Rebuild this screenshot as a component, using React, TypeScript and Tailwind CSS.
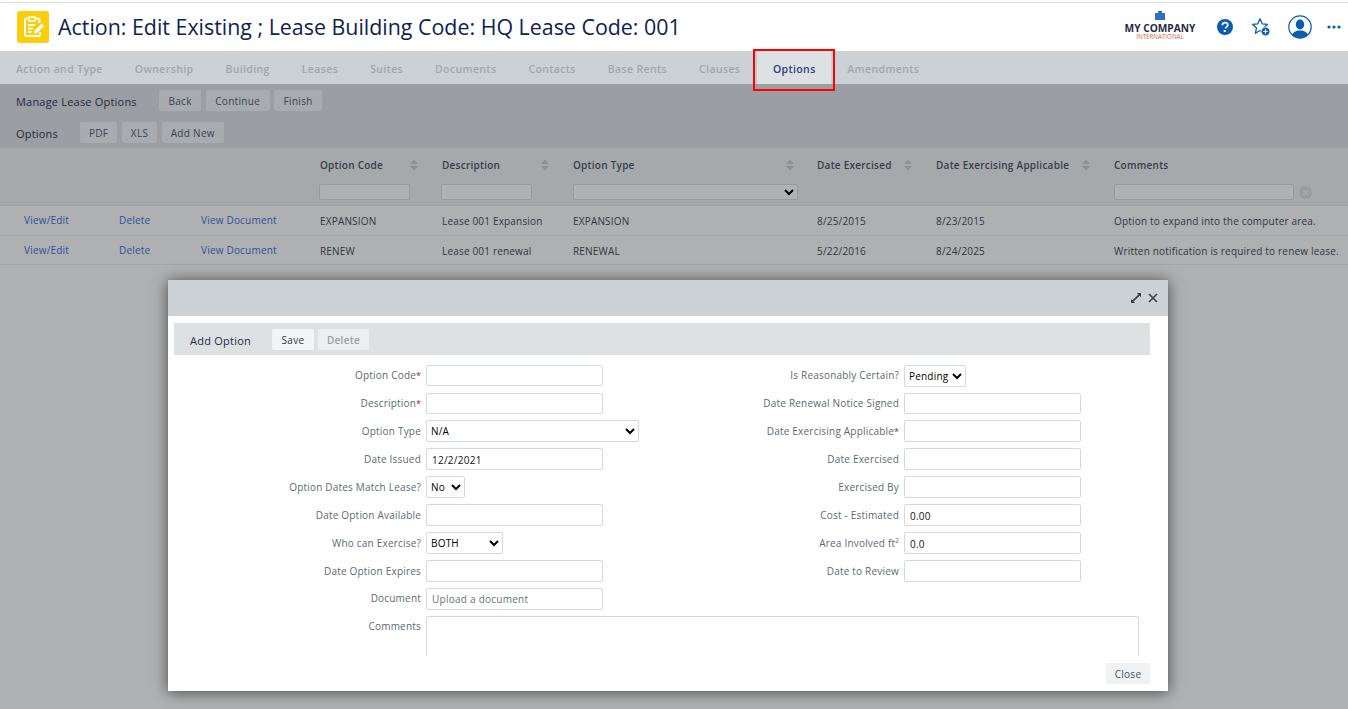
const font = { fontFamily: '"Open Sans", sans-serif' };

const tabs = ['Action and Type', 'Ownership', 'Building', 'Leases', 'Suites', 'Documents', 'Contacts', 'Base Rents', 'Clauses', 'Options', 'Amendments'];

const columns = 'grid grid-cols-[95px_82px_119px_122px_131px_244px_119px_178px_1fr] pl-[24px]';

const rows = [
  ['EXPANSION', 'Lease 001 Expansion', 'EXPANSION', '8/25/2015', '8/23/2015', 'Option to expand into the computer area.'],
  ['RENEW', 'Lease 001 renewal', 'RENEWAL', '5/22/2016', '8/24/2025', 'Written notification is required to renew lease.'],
];

function BarButton({ children, px = 'px-[9.5px]' }: { children: string; px?: string }) {
  return (
    <button className={`h-[21px] ${px} pt-[1px] rounded-[2px] bg-[#a8abaf] text-[#3a4454] text-[10px] font-medium tracking-[0.3px]`}>
      {children}
    </button>
  );
}

function SortIcon() {
  return (
    <svg width="8" height="12" viewBox="0 0 8 12" className="fill-[#8d9094]">
      <path d="M4 0.5 8 5H0z" />
      <path d="M4 11.500 0 7h8z" />
    </svg>
  );
}

function HeaderCell({ label, width, filter }: { label: string; width: string; filter?: string }) {
  return (
    <div className={`flex flex-col ${width}`}>
      <div className="flex h-[20px] items-center justify-between text-[10px] font-semibold tracking-[0.25px] text-[#363d48]">
        <span>{label}</span>
        <span className="mr-[2px]"><SortIcon /></span>
      </div>
      {filter === 'select' && (
        <select className="mt-[9px] h-[16px] w-[225px] rounded-[2px] border border-[#989b9e] bg-[#b0b1b3] text-[10px]" />
      )}
      {filter && filter !== 'select' && (
        <input className={`-ml-[1px] mt-[9px] h-[16px] rounded-[2px] border border-[#989b9e] bg-[#b0b1b3] ${filter}`} />
      )}
    </div>
  );
}

function Field({ label, req, children, h = 'h-[28px]', lh = 'leading-[22px]' }: { label: string; req?: boolean; children: React.ReactNode; h?: string; lh?: string }) {
  return (
    <div className={`flex ${h}`}>
      <div className={`w-[252px] pr-[5px] text-right text-[10px] tracking-[0.2px] text-[#5d6773] ${lh}`}>
        {label}
        {req && <span className="text-[9px] tracking-normal text-[#a02030]">*</span>}
      </div>
      {children}
    </div>
  );
}

const inputClass = 'h-[22px] w-[177px] rounded-[2px] border border-[#d5d9dc] bg-white px-[5px] pt-[1px] text-[10px] tracking-[0.25px] text-[#111]';
const uploadClass = 'h-[22px] w-[177px] rounded-[2px] border border-[#d5d9dc] bg-white px-[5px] text-[10px] tracking-[0.25px] placeholder:text-[#66707a]';
const shortInput = 'h-[21px] w-[177px] rounded-[2px] border border-[#d5d9dc] bg-white';
const selectClass = 'h-[22px] rounded-[2px] border border-[#d5d9dc] bg-white text-[10px] tracking-[0.2px] text-black';

function LogoIcon() {
  return (
    <svg width="32" height="32" viewBox="0 0 32 32" className="rounded-[3px] bg-[#fbcd0a]">
      <path d="M11 7.500H9.500a1.500 1.500 0 0 0-1.500 1.500v14.500A1.500 1.500 0 0 0 9.500 25h12a1.500 1.500 0 0 0 1.500-1.500V21" fill="none" stroke="#fff" strokeWidth="2" />
      <path d="M19 7.500h2a1.500 1.500 0 0 1 1.500 1.500v3" fill="none" stroke="#fff" strokeWidth="2" />
      <path d="M12 6h6v4h-6z" fill="none" stroke="#fff" strokeWidth="1.6" />
      <path d="M11 14h7M11 17.500h5M11 21h3.500" stroke="#fff" strokeWidth="1.8" />
      <path d="M17 22.500l.6-3 7-7 2.400 2.400-7 7z" fill="#fff" />
    </svg>
  );
}

function HeaderIcons() {
  return (
    <div className="flex items-center">
      <svg width="18" height="18" viewBox="0 0 18 18" className="ml-[20px]">
        <circle cx="9" cy="9" r="8" fill="#0b5cad" />
        <path d="M6.300 7.200c0-1.600 1.200-2.600 2.800-2.600s2.700.9 2.700 2.300c0 1.900-2.200 2-2.200 3.600" fill="none" stroke="#fff" strokeWidth="1.8" />
        <rect x="7.700" y="12" width="2" height="2" fill="#fff" />
      </svg>
      <svg width="20" height="20" viewBox="0 0 20 20" className="ml-[17px]">
        <path d="M9 1.800l2.200 5 5.300.5-4 3.600 1.100 5.300L9 13.500l-4.600 2.700 1.100-5.300-4-3.600 5.300-.5z" fill="none" stroke="#0b5cad" strokeWidth="1.3" strokeLinejoin="round" />
        <circle cx="14.500" cy="14.500" r="4.400" fill="#0b5cad" stroke="#fff" strokeWidth="0.8" />
        <path d="M14.500 12.300v4.400M12.300 14.500h4.400" stroke="#fff" strokeWidth="1.2" />
      </svg>
      <svg width="24" height="24" viewBox="0 0 24 24" className="ml-[17px]">
        <defs>
          <clipPath id="userClip"><circle cx="12" cy="12" r="11" /></clipPath>
        </defs>
        <circle cx="12" cy="12" r="11.200" fill="#fff" stroke="#0b5cad" strokeWidth="1.2" />
        <g clipPath="url(#userClip)" fill="#0b5cad">
          <ellipse cx="12" cy="9.500" rx="4.200" ry="5" />
          <path d="M3 24c0-5.500 3.500-7.500 6.500-8.500h5c3 1 6.500 3 6.500 8.500z" />
        </g>
      </svg>
      <svg width="14" height="4" viewBox="0 0 14 4" className="ml-[15px] mr-[7px]" fill="#0b5cad">
        <circle cx="2" cy="2" r="1.600" />
        <circle cx="7" cy="2" r="1.600" />
        <circle cx="12" cy="2" r="1.600" />
      </svg>
    </div>
  );
}

export default function App() {
  return (
    <div style={font} className="relative h-[709px] w-[1348px] overflow-hidden bg-[#afb0b2]">
      <div className="bg-white pt-[2px]">
        <header className="flex h-[49px] items-center justify-between border-t border-[#dcdcdc] pl-[17px]">
          <div className="flex items-center">
            <LogoIcon />
            <h1 className="ml-[9px] text-[21.4px] font-medium text-[#0e2250]">
              Action: Edit Existing ; Lease Building Code: HQ Lease Code: 001
            </h1>
          </div>
          <div className="flex items-center">
            <div className="relative flex w-[72px] flex-col items-center pt-[9px]">
              <svg width="10" height="9" viewBox="0 0 10 9" className="absolute left-[31px] top-[-3px]" fill="#2f6fc4">
                <rect x="0" y="2" width="10" height="7" />
                <rect x="3" y="0" width="4" height="2" />
              </svg>
              <span className="text-[10.2px] font-bold leading-[10px] whitespace-nowrap text-[#1f2a44]">MY COMPANY</span>
              <span className="text-[6.2px] leading-[7px] whitespace-nowrap text-[#d2604f]">INTERNATIONAL</span>
            </div>
            <HeaderIcons />
          </div>
        </header>
      </div>

      <nav className="flex h-[33px] bg-[#ccd1d5] text-[10.5px] font-semibold tracking-[0.37px]">
        {tabs.map((tab) =>
          tab === 'Options' ? (
            <div key={tab} className="flex w-[75px] items-center justify-center border-l border-[#c0c4c8] bg-[#dee1e4] pt-[4px] text-[#2a4474]">
              {tab}
            </div>
          ) : (
            <div key={tab} className="flex items-center px-[16px] pt-[4px] text-[#a1a6ab]">
              {tab}
            </div>
          ),
        )}
      </nav>
      <div className="absolute left-[753px] top-[49px] h-[42px] w-[82px] border-[2px] border-[#ff0000]" />

      <section className="h-[64px] bg-[#9b9ea2] pl-[16px]">
        <div className="flex h-[32px] items-start pt-[6px]">
          <span className="mt-[1px] w-[143px] text-[11px] leading-[21px] font-medium tracking-[0.2px] text-[#1f2a44]">Manage Lease Options</span>
          <div className="flex gap-[4.5px]">
            <BarButton>Back</BarButton>
            <BarButton>Continue</BarButton>
            <BarButton>Finish</BarButton>
          </div>
        </div>
        <div className="flex h-[32px] items-start pt-[6px]">
          <span className="mt-[1px] w-[64px] text-[11px] leading-[21px] font-medium tracking-[0.2px] text-[#1f2a44]">Options</span>
          <div className="flex gap-[4.5px]">
            <BarButton px="px-[9px]">PDF</BarButton>
            <BarButton px="px-[9px]">XLS</BarButton>
            <BarButton px="px-[9px]">Add New</BarButton>
          </div>
        </div>
      </section>

      <div className={`${columns} h-[58px] border-b border-[#a0a3a6] bg-[#a6a9ac] pt-[7px]`}>
        <div />
        <div />
        <div />
        <HeaderCell label="Option Code" width="w-[100px]" filter="w-[91px]" />
        <HeaderCell label="Description" width="w-[109px]" filter="w-[91px]" />
        <HeaderCell label="Option Type" width="w-[223px]" filter="select" />
        <HeaderCell label="Date Exercised" width="w-[97px]" />
        <HeaderCell label="Date Exercising Applicable" width="w-[156px]" />
        <div className="flex flex-col">
          <div className="flex h-[20px] items-center text-[10px] font-semibold tracking-[0.25px] text-[#363d48]">Comments</div>
          <div className="mt-[9px] flex items-center">
            <input className="h-[16px] w-[180px] rounded-[2px] border border-[#989b9e] bg-[#b0b1b3]" />
            <span className="ml-[5px] flex h-[13px] w-[13px] items-center justify-center rounded-full bg-[#999c9f] text-[9px] leading-none text-[#afb0b2]">✕</span>
          </div>
        </div>
      </div>

      {rows.map((row) => (
        <div key={row[0]} className={`${columns} h-[29.5px] items-center border-b border-[#a2a5a8] pt-[3px] text-[10px] tracking-[0.18px] text-[#2f3640]`}>
          <span className="-mt-[2px] tracking-[0.2px] text-[#2f4ea0]">View/Edit</span>
          <span className="-mt-[2px] tracking-[0.2px] text-[#2f4ea0]">Delete</span>
          <span className="-mt-[2px] tracking-[0.2px] text-[#2f4ea0]">View Document</span>
          {row.map((cell) => (
            <span key={cell} className="whitespace-nowrap">{cell}</span>
          ))}
        </div>
      ))}

      <div className="absolute left-[168px] top-[280px] flex h-[411px] w-[1000px] flex-col bg-white shadow-[0_1px_14px_rgba(0,0,0,0.6)]">
        <div className="flex h-[36px] items-center justify-end gap-[7px] bg-[#ccd1d5] pr-[10px]">
          <svg width="10" height="10" viewBox="0 0 11 11" fill="#3a4048">
            <path d="M6.500 0H11v4.500L9.400 2.900 2.900 9.400 4.500 11H0V6.500L1.600 8.100 8.100 1.600z" />
          </svg>
          <svg width="10" height="10" viewBox="0 0 10 10" stroke="#3a4048" strokeWidth="1.6">
            <path d="M1 1l8 8M9 1L1 9" />
          </svg>
        </div>

        <div className="mx-[6px] mt-[7px] flex h-[32px] w-[976px] items-center bg-[#dee1e4] pl-[16px]">
          <span className="w-[82px] pt-[4px] text-[11px] font-medium tracking-[0.25px] text-[#1f2a44]">Add Option</span>
          <button className="h-[21px] w-[42px] rounded-[2px] bg-[#f3f4f5] pt-[2px] text-[10px] font-medium tracking-[0.35px] text-[#2f3746]">Save</button>
          <button className="ml-[4px] h-[21px] w-[51px] rounded-[2px] bg-[#eceef0] pt-[2px] text-[10px] font-semibold tracking-[0.3px] text-[#9aa0a6]">Delete</button>
        </div>

        <div className="mx-[6px] mt-[10px] h-[291px] overflow-hidden">
          <div className="flex">
            <div className="flex flex-col">
              <Field label="Option Code" req lh="leading-[20px]"><input className={shortInput} /></Field>
              <Field label="Description" req h="h-[27px]" lh="leading-[20px]"><input className={shortInput} /></Field>
              <Field label="Option Type">
                <select defaultValue="N/A" className={`${selectClass} w-[213px]`}><option>N/A</option></select>
              </Field>
              <Field label="Date Issued"><input defaultValue="12/2/2021" className={inputClass} /></Field>
              <Field label="Option Dates Match Lease?">
                <select defaultValue="No" className={`${selectClass} w-[39px]`}><option>No</option></select>
              </Field>
              <Field label="Date Option Available"><input className={inputClass} /></Field>
              <Field label="Who can Exercise?">
                <select defaultValue="BOTH" className={`${selectClass} w-[77px]`}><option>BOTH</option></select>
              </Field>
              <Field label="Date Option Expires"><input className={inputClass} /></Field>
              <Field label="Document" lh="leading-[20px]"><input placeholder="Upload a document" className={uploadClass} /></Field>
            </div>
            <div className="ml-[13px] flex flex-col">
              <Field label="Is Reasonably Certain?" lh="leading-[20px]">
                <select defaultValue="Pending" className={`${selectClass} h-[21px] w-[62px]`}><option>Pending</option></select>
              </Field>
              <Field label="Date Renewal Notice Signed" h="h-[27px]" lh="leading-[20px]"><input className={shortInput} /></Field>
              <Field label="Date Exercising Applicable" req><input className={inputClass} /></Field>
              <Field label="Date Exercised"><input className={inputClass} /></Field>
              <Field label="Exercised By"><input className={inputClass} /></Field>
              <Field label="Cost - Estimated"><input defaultValue="0.00" className={inputClass} /></Field>
              <Field label="Area Involved ft²"><input defaultValue="0.0" className={inputClass} /></Field>
              <Field label="Date to Review"><input className={inputClass} /></Field>
            </div>
          </div>
          <Field label="Comments" h="h-[60px]" lh="leading-[20px]">
            <textarea className="h-[60px] w-[713px] resize-none rounded-[2px] border border-[#d5d9dc] bg-white" />
          </Field>
        </div>

        <div className="mr-[18px] mt-[7px] flex justify-end">
          <button className="h-[21px] w-[44px] rounded-[2px] bg-[#f0f1f2] pt-[1px] text-[10px] font-medium tracking-[0.3px] text-[#4a5260]">Close</button>
        </div>
      </div>
    </div>
  );
}
